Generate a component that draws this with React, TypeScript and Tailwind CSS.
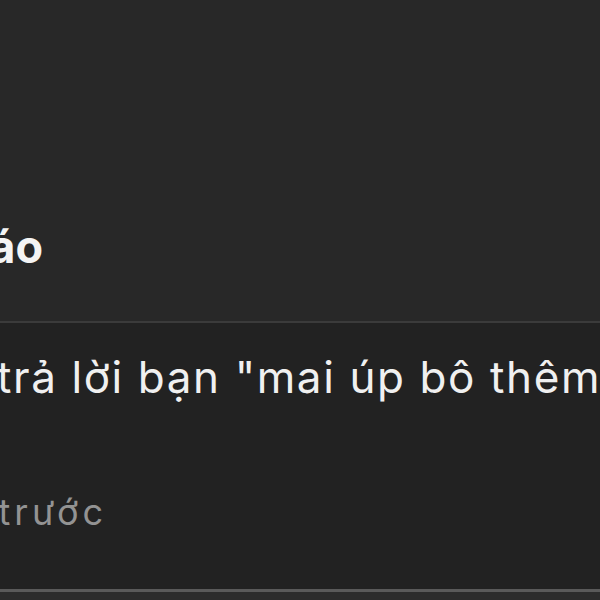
export default function App() {
  return (
    <div className="h-[600px] w-[600px] overflow-hidden bg-[#222222] font-['Inter','Liberation_Sans',sans-serif]">
      <div className="h-[321px] bg-[#282828] pt-[224px]">
        <div className="flex w-[43px] justify-end whitespace-nowrap text-[45px] leading-none font-bold text-[#f4f4f4]">
          Thông báo
        </div>
      </div>
      <div className="h-[2px] bg-[#3b3b3b]" />
      <div className="flex h-[266px] flex-col">
        <div className="mt-[32px] flex whitespace-nowrap text-[44px] leading-none tracking-[1.6px] text-[#f0f0f0]">
          <span className="flex w-0 justify-end">đã&nbsp;</span>
          <span className="-ml-[3px]">trả lời bạn "mai úp bô thêm đi nha"</span>
        </div>
        <div className="mt-[95px] flex w-[107px] justify-end whitespace-nowrap text-[36px] leading-none tracking-[4px] text-[#939393]">
          2 giờ trước
        </div>
      </div>
      <div className="h-[3px] bg-[#5a5a5a]" />
      <div className="h-full bg-[#2c2c2c]" />
    </div>
  );
}
